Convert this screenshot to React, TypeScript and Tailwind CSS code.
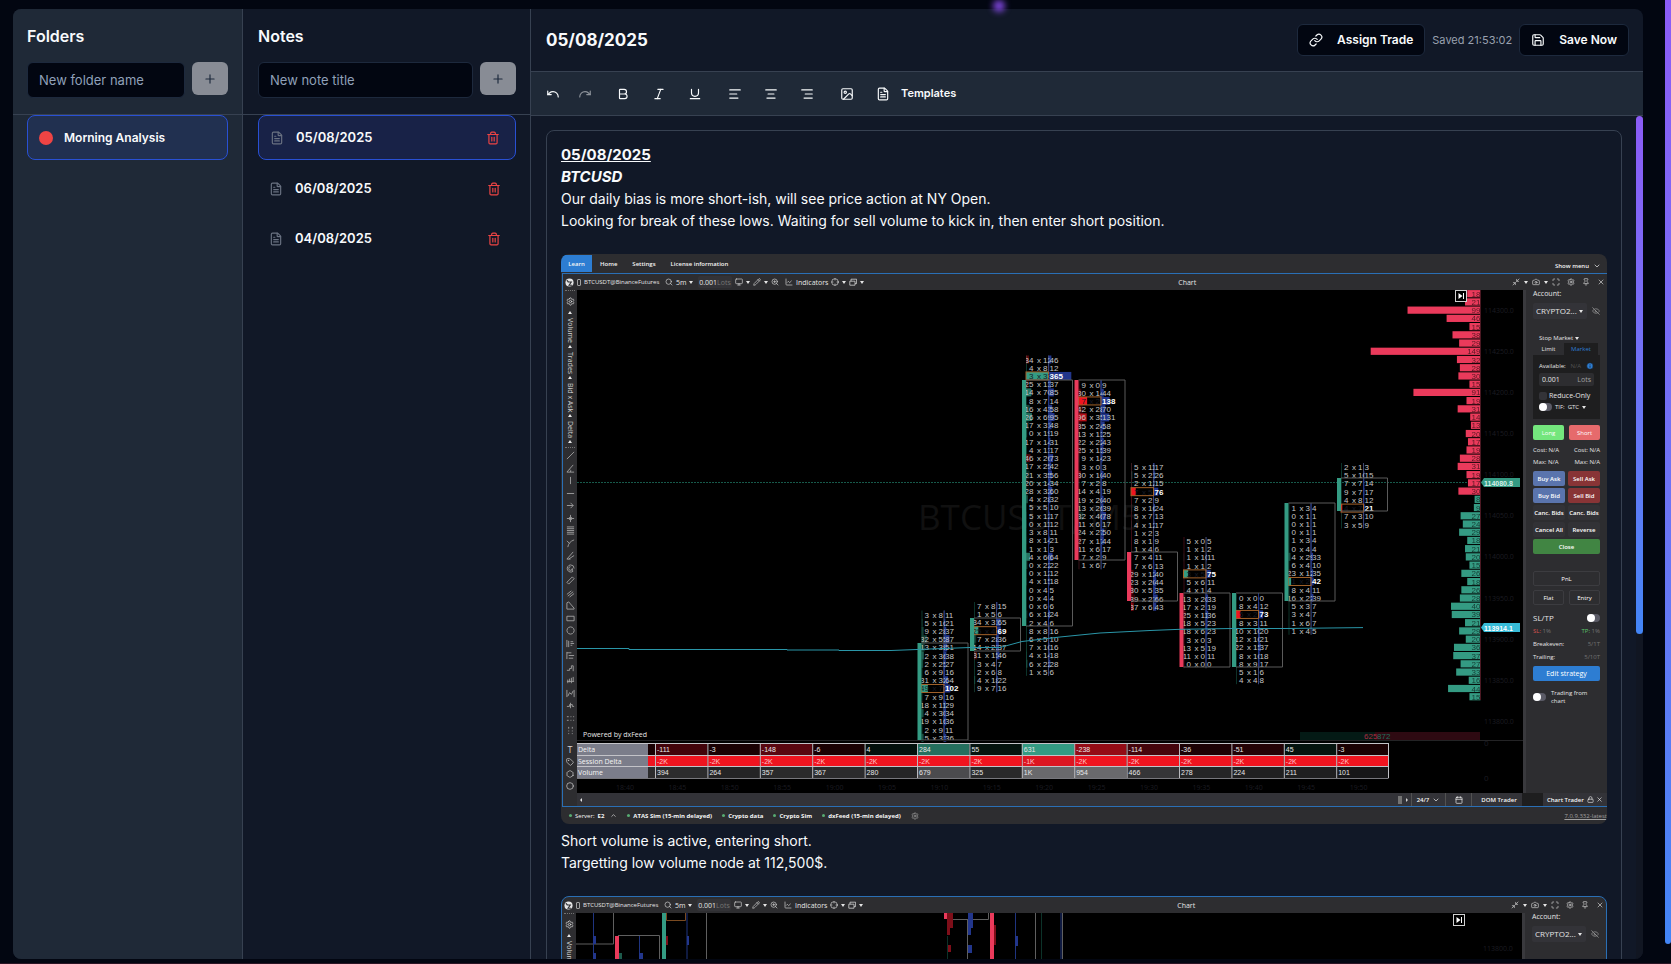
import type { ReactNode } from 'react';
import {
  AlignCenter,
  AlignLeft,
  AlignRight,
  Bold,
  Calendar,
  Camera,
  ChartLine,
  ChevronDown,
  ChevronUp,
  Circle,
  Crosshair,
  EyeOff,
  FileText,
  Hexagon,
  Image,
  Info,
  Italic,
  Link,
  Lock,
  Maximize,
  Minimize2,
  Monitor,
  Pencil,
  Pin,
  Plus,
  Redo,
  Save,
  Search,
  Settings,
  Tag,
  Trash2,
  Underline,
  Undo,
  X,
  ZoomIn,
} from 'lucide-react';

const UP = '#349b83';
const DOWN = '#ea3a5b';

const notes = [
  { id: 1, title: '05/08/2025', active: true },
  { id: 2, title: '06/08/2025', active: false },
  { id: 3, title: '04/08/2025', active: false },
];

// ---------- footprint chart ----------

const ROW = 8.22;

type Candle = {
  x: number;
  y: number; // centre of the first row
  up: boolean;
  top: number;
  bottom: number;
  rows: string; // "bid ask volume", a leading * marks the point of control
  pocUp: boolean;
};

const candles: Candle[] = [
  {
    x: 917.5, y: 614.5, up: true, top: 643, bottom: 740, pocUp: true,
    rows: '3 8 11,5 16 21,9 28 37,32 55 87,13 38 51,2 36 38,2 25 27,6 9 16,31 32 64,*49 77 102,7 9 16,18 11 29,4 30 34,19 16 36,2 9 11,5 31 36',
  },
  {
    x: 970, y: 606, up: true, top: 618, bottom: 651, pocUp: true,
    rows: '7 8 15,1 5 6,34 31 65,*25 43 69,7 28 36,14 23 37,31 15 46,3 4 7,2 6 8,4 18 22,9 7 16',
  },
  {
    x: 1022, y: 359.5, up: true, top: 380, bottom: 626, pocUp: true,
    rows: '34 12 46,4 8 12,*3 33 365,25 13 37,14 70 85,8 7 14,16 43 58,26 69 95,17 31 48,0 19 19,17 14 31,4 13 17,46 26 73,17 25 42,21 35 56,20 14 34,28 32 60,4 28 32,5 5 10,5 12 17,0 11 12,3 8 11,8 14 21,1 1 3,4 60 64,0 22 22,0 12 12,4 15 18,0 4 5,0 4 4,0 6 6,6 18 24,2 4 6,8 8 16,6 5 10,7 10 16,4 14 18,6 22 28,1 5 6',
  },
  {
    x: 1074.5, y: 384.5, up: false, top: 380, bottom: 560, pocUp: false,
    rows: '9 0 9,30 14 44,*7 2 138,42 28 70,96 35 131,35 24 58,13 13 25,22 22 43,25 15 39,9 14 23,3 0 3,30 10 40,7 2 8,14 4 19,19 20 40,13 26 39,32 46 78,11 6 17,24 27 50,27 17 44,11 6 17,7 2 9,1 6 7',
  },
  {
    x: 1127, y: 467, up: false, top: 552, bottom: 601, pocUp: false,
    rows: '5 11 17,5 21 26,2 12 15,*7 5 76,7 2 9,8 16 24,5 7 13,4 12 17,1 2 3,8 1 9,1 4 6,7 4 11,7 6 13,29 12 40,23 20 44,30 5 35,39 27 66,37 6 43',
  },
  {
    x: 1179.5, y: 541, up: false, top: 593, bottom: 667, pocUp: true,
    rows: '5 0 5,1 1 2,1 10 11,1 1 2,*3 5 75,5 6 11,4 1 4,13 20 33,17 2 19,25 11 36,18 5 23,18 6 23,3 0 3,13 5 19,11 0 11,0 0 0',
  },
  {
    x: 1232, y: 598, up: true, top: 593, bottom: 667, pocUp: false,
    rows: '0 0 0,8 4 12,*5 2 73,8 3 11,10 10 20,12 10 21,22 15 37,8 10 18,8 9 17,5 1 6,4 4 8',
  },
  {
    x: 1284.5, y: 507.5, up: true, top: 503, bottom: 601, pocUp: true,
    rows: '1 3 4,0 1 1,0 1 1,0 1 1,1 3 4,0 4 4,4 29 33,6 4 10,23 12 35,*1 2 42,8 4 11,16 22 39,5 3 7,3 4 7,1 6 7,1 4 5',
  },
  {
    x: 1337, y: 467, up: true, top: 478, bottom: 511, pocUp: false,
    rows: '2 1 3,5 10 15,7 7 14,9 7 17,4 8 12,*4 7 21,7 3 10,3 5 9',
  },
];

const profile = [
  18, 21, 99, 46, 15, 38, 29, 149, 32, 28, 30, 15, 91, 19, 31, 14, 13, 20, 17, 19, 28, 31, 19, 17, 30, 8, 9, 27, 24, 29,
  18, 21, 20, 15, 26, 18, 26, 28, 40, 39, 21, 29, 20, 36, 37, 27, 33, 16, 44, 15,
];

const priceLabels = [
  '114300.0', '114250.0', '114200.0', '114150.0', '114100.0', '114050.0', '114000.0', '113950.0', '113900.0',
  '113850.0', '113800.0',
];

const clusterStats = [
  { delta: '-111', session: '-2K', volume: '394', fill: '#43040b', vol: '#2c2c2d' },
  { delta: '-3', session: '-2K', volume: '264', fill: '#1a0103', vol: '#242425' },
  { delta: '-148', session: '-2K', volume: '357', fill: '#5a0710', vol: '#2a2a2b' },
  { delta: '-6', session: '-2K', volume: '367', fill: '#1a0103', vol: '#2b2b2c' },
  { delta: '4', session: '-2K', volume: '280', fill: '#03100d', vol: '#252526' },
  { delta: '284', session: '-2K', volume: '679', fill: '#256f5e', vol: '#4b4b4e' },
  { delta: '55', session: '-2K', volume: '325', fill: '#05140f', vol: '#29292a' },
  { delta: '631', session: '-1K', volume: '1K', fill: '#349b83', vol: '#69696c' },
  { delta: '-238', session: '-2K', volume: '954', fill: '#940c16', vol: '#69696c' },
  { delta: '-114', session: '-2K', volume: '466', fill: '#45050c', vol: '#353537' },
  { delta: '-36', session: '-2K', volume: '278', fill: '#1d0205', vol: '#252526' },
  { delta: '-51', session: '-2K', volume: '224', fill: '#240306', vol: '#202021' },
  { delta: '45', session: '-2K', volume: '211', fill: '#05140f', vol: '#1f1f20' },
  { delta: '-3', session: '-2K', volume: '101', fill: '#1a0103', vol: '#171718' },
];

const times = [
  '18:40', '18:45', '18:50', '18:55', '19:00', '19:05', '19:10', '19:15', '19:20', '19:25', '19:30', '19:35', '19:40',
  '19:45', '19:50',
];

function Footprint({ c, id }: { c: Candle; id: string }) {
  const rows = c.rows.split(',');
  const last = c.y + (rows.length - 1) * ROW;
  return (
    <g>
      <clipPath id={id}>
        <rect x={c.x + 4} y={c.y - 8} width={23.5} height={last - c.y + 16} />
      </clipPath>
      <path d={`M${c.x + 4.5} ${c.y - 4}V${last + 4}`} stroke={c.up ? '#0c3229' : '#3a0c14'} />
      <path d={`M${c.x + 26.5} ${c.y - 4}V${last + 4}`} stroke="#4a4f66" />
      <path d={`M${c.x + 26.5} ${c.top}V${c.bottom}`} stroke="#1f3480" />
      {rows.map((row, i) => {
        const poc = row.startsWith('*');
        const [bid, ask, vol] = row.replace('*', '').split(' ').map(Number);
        const y = c.y + i * ROW;
        const bar = Math.min(vol / 16, 23);
        const tint = poc ? 1 : Math.min(0.75, Math.abs(ask - bid) / 60);
        const up = poc ? c.pocUp : ask >= bid;
        return (
          <g key={i}>
            <rect x={c.x + 4} y={y - 4} width={bar} height={8} fill={up ? UP : '#f0141f'} opacity={tint} />
            <rect x={c.x + 26.5} y={y - 4} width={bar} height={8} fill="#22368c" />
            {poc && <rect x={c.x + 4} y={y - 4} width={22.5} height={8} fill="none" stroke="#a3622a" />}
            <g clipPath={`url(#${id})`} fill={poc ? '#171b26' : '#c6c6c6'}>
              <text x={c.x + 11.5} y={y + 3} textAnchor="end">{bid}</text>
              <text x={c.x + 15} y={y + 3}>x</text>
              <text x={c.x + 21} y={y + 3}>{ask}</text>
            </g>
            <text x={c.x + 27.5} y={y + 3} fill={poc ? '#ffffff' : '#c6c6c6'} fontWeight={poc ? 700 : 400}>
              {vol}
            </text>
          </g>
        );
      })}
      <rect x={c.x} y={c.top} width={4} height={c.bottom - c.top} fill={c.up ? UP : DOWN} />
      <path d={`M${c.x + 4} ${c.top}h46.5V${c.bottom}h-46.5`} fill="none" stroke="#5a5a5a" />
    </g>
  );
}

function StepButton({ x, y }: { x: number; y: number }) {
  return (
    <g>
      <rect x={x} y={y} width={11} height={11} fill="#000" stroke="#d0d0d0" />
      <path d={`M${x + 3} ${y + 2.5}v6l4-3zM${x + 7.5} ${y + 2.5}h1v6h-1z`} fill="#fff" />
    </g>
  );
}

function ClusterChart() {
  return (
    <svg
      viewBox="577 290 946 503"
      preserveAspectRatio="none"
      className="h-[503px] w-full bg-black"
      fontFamily="'Liberation Sans', Arial, sans-serif"
      fontSize="8"
      role="img"
      aria-label="BTCUSDT cluster chart"
    >
      <text x="918" y="530" fontSize="35" fill="#101010" fontFamily="'Open Sans', sans-serif">
        BTCUSDT, M5
      </text>
      <path d="M577 482.5H1481" stroke="#17594a" strokeDasharray="2 1" />
      {candles.map((c, i) => (
        <Footprint key={c.x} c={c} id={`col-${i}`} />
      ))}
      <path
        d="M577 648.5h52v1h158v.5h52v.5h52l26-1 53-2h30l22-6 38-4.500 40-4 50-2.500 30-1.200 52-.8h53l78-.9"
        fill="none"
        stroke="#2a96a8"
      />

      {/* volume profile */}
      {profile.map((v, i) => {
        const y = 293.7 + i * 8.225;
        const w = v * 0.737;
        return (
          <g key={i}>
            <rect x={1480.5 - w} y={y - 3.6} width={w} height={7.2} fill={i < 25 ? DOWN : UP} />
            <text x={1480.5} y={y + 3} textAnchor="end" fill="#000" opacity="0.62">{v}</text>
          </g>
        );
      })}
      <path d="M1480.500 290V700" stroke="#4b1822" />
      <StepButton x={1455.5} y={290.5} />
      <g fill="#1c1c22" fontFamily="'Open Sans', sans-serif">
        {priceLabels.map((p, i) => (
          <text key={p} x="1484" y={312.5 + i * 41.15} fontSize="7">{p}</text>
        ))}
        <text x="1484" y="746">0</text>
        <text x="1484" y="781">0</text>
      </g>
      <path d="M1481 482.500l3-4.500h36v9h-36z" fill={UP} />
      <text x="1484" y="485.5" fill="#d5efe8" fontWeight="700" fontSize="7">114080.8</text>
      <path d="M1481 627.500l3-4.500h36v9h-36z" fill="#37bcd8" />
      <text x="1484" y="630.5" fill="#fff" fontWeight="700" fontSize="7">113914.1</text>

      <rect x="1300" y="732" width="75" height="8" fill="#041a15" />
      <rect x="1375" y="732" width="105" height="8" fill="#2e0a12" />
      <text x="1364" y="739" fill="#a82c42">625</text>
      <text x="1377" y="739" fill="#20705e">872</text>
      <text x="583" y="737" fontSize="7" fill="#e8e8e8" fontFamily="'Open Sans', sans-serif">Powered by dxFeed</text>

      {/* cluster statistic */}
      <path d="M577 740.500H1523" stroke="#232325" />
      <rect x="577" y="743" width="71" height="35" fill="#7b7d8a" />
      <rect x="648" y="743" width="7" height="12" fill="#1a0103" />
      <rect x="648" y="756" width="7" height="10" fill="#f0141f" />
      <rect x="648" y="767" width="7" height="11" fill="#2c2c2d" />
      {clusterStats.map((s, i) => {
        const x = 655 + i * 52.4;
        return (
          <g key={i} fontSize="7" fill="#e6e6e6">
            <rect x={x} y="743" width="52.4" height="12" fill={s.fill} />
            <rect x={x} y="755" width="52.4" height="11" fill={s.session === '-1K' ? '#dd1621' : '#f0141f'} />
            <rect x={x} y="767" width="52.4" height="11" fill={s.vol} />
            <path d={`M${x + 0.5} 743v35`} stroke="#b9b9bd" />
            <text x={x + 2} y="752">{s.delta}</text>
            <text x={x + 2} y="764" fill="#ffc4c8">{s.session}</text>
            <text x={x + 2} y="775">{s.volume}</text>
          </g>
        );
      })}
      <path d="M577 743.500H1388.500M577 755.500H1388.500M577 766.500H1388.500M1388.500 743V778" stroke="#c3c3c8" fill="none" />
      <path d="M577 778.500H1388.500" stroke="#77777c" />
      <g fontSize="7" fill="#f4f4f4" fontFamily="'Open Sans', sans-serif">
        <text x="578" y="752">Delta</text>
        <text x="578" y="764">Session Delta</text>
        <text x="578" y="775">Volume</text>
      </g>
      <g fontSize="7" fill="#1c1c22" textAnchor="middle" fontFamily="'Open Sans', sans-serif">
        {times.map((t, i) => (
          <text key={t} x={625 + i * 52.4} y="790">{t}</text>
        ))}
      </g>
    </svg>
  );
}

// next capture, only its first rows are in view
function ClusterChartNext() {
  return (
    <svg viewBox="577 913 946 503" preserveAspectRatio="none" className="h-[503px] w-full bg-black" role="img" aria-label="BTCUSDT cluster chart, later">
      <g fill="none" stroke="#5f5f5f">
        <path d="M614.500 913v31H577M594.500 944v472M619 935.500h41.500V1416M707.500 913v503M948 919.500h41.500V913M968.500 919.500V1416M1036.500 913v503M1063.500 913v503" />
      </g>
      <path d="M594.500 913v503M640.500 936v480M688 913v503M1016.500 913v503M1062 913v503" stroke="#1f3480" />
      <path d="M594 936h3v8h-3zM594 953h3v10h-3zM640 953h4v10h-4zM688 936h2v9h-2zM969 913h5v15h-5zM969 928h3v7h-3zM969 945h4v8h-4zM1016 936h3v10h-3z" fill="#22368c" />
      <path d="M663 913h4v503h-4z" fill={UP} />
      <path d="M619 953h4v10h-4z" fill="#1d5a4c" />
      <path d="M616 936h4v480h-4zM945 913h3v6h-3zM991 913h4v503h-4zM667 913h1v7h-1z" fill={DOWN} />
      <path d="M948 913h6v15h-6zM948 928h3v7h-3zM948 945h4v7h-4zM995 925h2v20h-2zM667 936h2v9h-2z" fill="#7e0e19" />
      <path d="M667.500 913v7.500h19V913" stroke="#7a4a20" fill="none" />
      <path d="M948.500 936v480M1042.500 913v503" stroke="#0c3229" />
      <StepButton x={1454.5} y={914.5} />
      <text x="1484" y="951" fontSize="7" fill="#1c1c22" fontFamily="'Open Sans', sans-serif">113800.0</text>
    </svg>
  );
}

// ---------- trading terminal chrome ----------

function Caret() {
  return <span className="size-0 border-x-2 border-t-3 border-x-transparent border-t-neutral-200" />;
}

function WindowBar() {
  const icon = 'size-2 shrink-0 text-neutral-300';
  return (
    <div className="flex h-4 items-center justify-between pr-[2px] pl-[2px] text-[7px] leading-none text-neutral-200">
      <div className="flex flex-3 items-center gap-[3px]">
        <svg viewBox="0 0 10 10" className="size-[9px]">
          <circle cx="5" cy="5" r="4.500" fill="#e5e5e5" />
          <path d="M3 4.500h4L4.500 8H8M2 2.500l2 2" stroke="#2d2d30" strokeWidth="1.200" fill="none" />
        </svg>
        <span className="h-[7px] w-1 rounded-[1px] border border-neutral-400" />
        <span className="w-[78px] whitespace-nowrap text-[6px] font-medium">BTCUSDT@BinanceFutures</span>
        <Search className={icon} />
        <span className="w-[10px]">5m</span>
        <Caret />
        <span className="ml-[2px] flex h-3 w-[34px] items-center justify-center rounded-xs bg-[#333337]">
          0.001<span className="text-neutral-500">Lots</span>
        </span>
        <Monitor className={icon} />
        <Caret />
        <Pencil className={icon} />
        <Caret />
        <ZoomIn className={icon} />
        <ChartLine className="ml-[3px] size-2 shrink-0 text-neutral-300" />
        <span>Indicators</span>
        <Crosshair className={icon} />
        <Caret />
        <svg viewBox="0 0 10 10" className={icon} fill="none" stroke="currentColor">
          <path d="M1 4h6.500v5H1zM2.500 4V1.500H9.500V7H7.500" />
        </svg>
        <Caret />
      </div>
      <span>Chart</span>
      <div className="flex flex-2 items-center justify-end gap-1">
        <Minimize2 className={icon} />
        <Caret />
        <Camera className={icon} />
        <Caret />
        <Maximize className={icon} />
        <Settings className="ml-[3px] size-2 text-neutral-300" />
        <Pin className="ml-[3px] size-2 text-neutral-300" />
        <X className="ml-[3px] size-2 text-neutral-300" />
      </div>
    </div>
  );
}

// one 10x10 path per drawing tool, top to bottom
const drawTools = [
  'M1 9L9 1',
  'M8 1L1 9H9M4 6q2 1 1 3',
  'M5 1V9',
  'M1 5H9',
  'M1 5H8M5 2L8 5L5 8',
  'M5 1V9M1 5H9M3.500 3.500l3 3M6.500 3.500l-3 3',
  'M1 1H9M1 3H9M1 5H9M1 7H9M1 9H9',
  'M2 9Q3 3 9 1M1 2l3 3',
  'M1 9L8 1M3 9L9 5M1 9H5',
  'M5 1a4 4 0 1 0 3 7M5 3a2 2 0 1 0 2 2V8M5 1a4 4 0 0 1 4 4',
  'M1 7L7 1L9 3L3 9Z',
  'M1 6L6 2M2 8L8 3M4 9L9 5',
  'M1 9V2L3 1L9 8V9Z',
  'M1 2.500H9V7.500H1Z',
  'M5 1a4 4 0 1 0 .1 0Z',
  'M1 1V9M3 2V9M5 3H8M5 5H9M5 7H7',
  'M1 1V9M1 2H6M3 5H9M3 8H8',
  'M1 7H4V5H6V2H8V8',
  'M2 4V8M4 3V7M6 2V8M8 1V6M1 6H9',
  'M1 1V9M9 1V9M2 8L4 4L6 6L8 2',
  'M1 6H4V4H7V6H9M5 2V8',
  'M1 3H3M5 3H6M8 3H9M1 7H3M5 7H6M8 7H9',
  'M3 1V3M3 5V6M3 8V9M7 1V3M7 5V6M7 8V9',
];

function ToolStrip() {
  return (
    <div className="flex h-full w-[14px] shrink-0 flex-col items-center overflow-hidden bg-[#2d2d30] text-[7px] leading-none text-neutral-300">
      <span className="h-1 w-[10px] border-t border-dotted border-neutral-500" />
      <Settings className="mt-[3px] size-[9px]" />
      <div className="mt-[5px] flex h-[132px] flex-col items-center justify-between">
        {['Volume', 'Trades', 'Bid x Ask', 'Delta'].map((t) => (
          <div key={t} className="flex flex-col items-center gap-1">
            <span className="size-0 border-x-2 border-b-3 border-x-transparent border-b-neutral-200" />
            <span className="[writing-mode:vertical-rl]">{t}</span>
          </div>
        ))}
        <span className="size-0 border-x-2 border-b-3 border-x-transparent border-b-neutral-200" />
      </div>
      <span className="mt-1 h-1 w-[10px] border-t border-dotted border-neutral-500" />
      <div className="flex h-[284px] shrink-0 flex-col justify-between">
        {drawTools.map((d) => (
          <svg key={d} viewBox="0 0 10 10" className="size-[9px] text-neutral-400" fill="none" stroke="currentColor">
            <path d={d} />
          </svg>
        ))}
      </div>
      <div className="mt-[10px] flex flex-col items-center gap-1">
        <span className="text-[9px] leading-[9px]">T</span>
        <Tag className="size-2" />
        <Hexagon className="size-2" />
        <Circle className="size-2" />
      </div>
    </div>
  );
}

function Toggle({ label }: { label: string }) {
  return (
    <span className="relative flex h-2 w-[13px] shrink-0 items-center rounded-full bg-[#5b5b66]">
      <input type="checkbox" aria-label={label} className="size-2 appearance-none rounded-full bg-white" />
    </span>
  );
}

function Mini({ className, children }: { className: string; children: ReactNode }) {
  return (
    <button type="button" className={`flex h-[15px] flex-1 items-center justify-center rounded-xs whitespace-nowrap text-white ${className}`}>
      {children}
    </button>
  );
}

function OrderPanel() {
  return (
    <div className="flex w-[84px] shrink-0 flex-col overflow-hidden border-l-3 border-[#39393d] bg-[#2d2d30] pr-[7px] pl-[7px] text-[6px] leading-[8px] font-medium text-neutral-200">
      <span className="text-[7px] font-normal">Account:</span>
      <div className="mt-[5px] flex h-4 shrink-0 items-center justify-between rounded-xs">
        <label className="relative flex h-full w-[54px] items-center rounded-xs bg-[#333338] pr-1 pl-[3px]">
          <select aria-label="Account" className="w-full appearance-none bg-transparent text-[8px] leading-none font-normal">
            <option>CRYPTO2...</option>
          </select>
          <Caret />
        </label>
        <EyeOff className="size-2 text-neutral-400" />
      </div>
      <span className="mt-[15px] flex items-center gap-[2px] pl-[6px]">
        Stop Market <Caret />
      </span>
      <div className="mt-px flex h-3 shrink-0 items-center">
        <button type="button" className="h-full w-[31px]">Limit</button>
        <button type="button" className="h-full w-[34px] bg-[#1e1e1f] text-[#2d7dd2]">Market</button>
      </div>
      <div className="flex h-16 shrink-0 flex-col bg-[#1e1e1f] px-[6px] pt-[7px]">
        <span className="flex items-center justify-between">
          Available: <span className="text-neutral-600">N/A</span>
          <Info className="size-2 fill-[#2d7dd2] text-neutral-900" />
        </span>
        <label className="mt-[3px] flex h-[13px] items-center rounded-xs bg-[#2d2d30] px-[3px] text-[7px]">
          <input aria-label="Size" defaultValue="0.001" className="w-full min-w-0 bg-transparent" />
          <span className="text-neutral-400">Lots</span>
        </label>
        <label className="mt-[6px] flex items-center gap-[2px] text-[7px]">
          <input type="checkbox" className="size-2 shrink-0 appearance-none rounded-xs bg-[#333338]" />
          <span className="whitespace-nowrap">Reduce-Only</span>
        </label>
        <span className="mt-[3px] flex items-center gap-[3px]">
          <Toggle label="Time in force" /> TIF: <span>GTC</span> <Caret />
        </span>
      </div>
      <div className="mt-[6px] flex shrink-0 gap-[5px]">
        <Mini className="bg-[#74e67d]">Long</Mini>
        <Mini className="bg-[#e66a6c]">Short</Mini>
      </div>
      <div className="mt-[6px] flex justify-between"><span>Cost: N/A</span><span>Cost: N/A</span></div>
      <div className="mt-1 flex justify-between"><span>Max: N/A</span><span>Max: N/A</span></div>
      <div className="mt-[5px] flex shrink-0 flex-col gap-[2px] font-semibold">
        <div className="flex gap-[3px]">
          <Mini className="bg-[#5a74ad]">Buy Ask</Mini>
          <Mini className="bg-[#883436]">Sell Ask</Mini>
        </div>
        <div className="flex gap-[3px]">
          <Mini className="bg-[#5a74ad]">Buy Bid</Mini>
          <Mini className="bg-[#883436]">Sell Bid</Mini>
        </div>
        <div className="flex gap-[3px]">
          <Mini className="bg-[#323236]">Canc. Bids</Mini>
          <Mini className="bg-[#323236]">Canc. Bids</Mini>
        </div>
        <div className="flex gap-[3px]">
          <Mini className="bg-[#323236]">Cancel All</Mini>
          <Mini className="bg-[#323236]">Reverse</Mini>
        </div>
        <div className="flex">
          <Mini className="bg-[#418543]">Close</Mini>
        </div>
      </div>
      <div className="mt-[17px] flex shrink-0"><Mini className="border border-[#3c3c40] text-neutral-400">PnL</Mini></div>
      <div className="mt-1 flex shrink-0 gap-[5px]">
        <Mini className="border border-[#3c3c40] text-neutral-400">Flat</Mini>
        <Mini className="border border-[#3c3c40] text-neutral-400">Entry</Mini>
      </div>
      <div className="mt-[9px] flex items-center justify-between text-[8px] font-normal">SL/TP <Toggle label="SL/TP" /></div>
      <div className="mt-[5px] flex justify-between">
        <span><span className="text-[#d9534f]">SL:</span> <span className="text-neutral-500">1%</span></span>
        <span><span className="text-[#5cc46a]">TP:</span> <span className="text-neutral-500">1%</span></span>
      </div>
      <div className="mt-[5px] flex justify-between">Breakeven: <span className="text-neutral-500">5/1T</span></div>
      <div className="mt-[5px] flex justify-between">Trailing: <span className="text-neutral-500">5/10T</span></div>
      <div className="mt-[5px] flex shrink-0 text-[7px]"><Mini className="bg-[#2d7dd2]">Edit strategy</Mini></div>
      <div className="mt-2 flex items-center gap-[5px]">
        <Toggle label="Trading from chart" />
        <span>Trading from chart</span>
      </div>
    </div>
  );
}

function TerminalSnapshot() {
  const sources = ['ATAS Sim (15-min delayed)', 'Crypto data', 'Crypto Sim', 'dxFeed (15-min delayed)'];
  return (
    <figure className="overflow-hidden rounded-lg bg-[#2d2d30] font-['Open_Sans',sans-serif] text-neutral-100">
      <div className="flex h-[19px] items-center pr-[6px] text-[6px] leading-none font-semibold">
        <span className="flex h-[17px] w-[31px] items-center justify-center bg-[#2d7dd2]">Learn</span>
        <span className="ml-2">Home</span>
        <span className="ml-[15px]">Settings</span>
        <span className="ml-[15px]">License information</span>
        <span className="mt-1 ml-auto flex items-center gap-1">
          Show menu
          <ChevronDown className="size-2" />
        </span>
      </div>
      <div className="ml-px flex h-[534px] border-y border-l border-[#2a6fb5]">
        <div className="flex min-w-0 flex-1 flex-col">
          <WindowBar />
          <div className="flex min-h-0 flex-1">
            <ToolStrip />
            <div className="flex min-w-0 flex-1 flex-col">
              <div className="flex">
                <div className="min-w-0 flex-1"><ClusterChart /></div>
                <OrderPanel />
              </div>
              <div className="flex flex-1 items-center bg-[#333338] pr-1 text-[6px] leading-none font-semibold">
                <span className="ml-[3px] size-0 border-y-2 border-r-2 border-y-transparent border-r-neutral-200" />
                <span className="ml-auto h-2 w-1 bg-neutral-500" />
                <span className="ml-1 size-0 border-y-2 border-l-2 border-y-transparent border-l-neutral-300" />
                <span className="ml-[3px] flex h-full w-[35px] items-center justify-center gap-[3px] border-x border-neutral-600">
                  24/7 <ChevronDown className="size-2" />
                </span>
                <span className="flex h-full w-[26px] items-center justify-center border-r border-neutral-600">
                  <Calendar className="size-2" />
                </span>
                <span className="w-[50px] pl-1 text-center">DOM Trader</span>
                <span className="h-full w-[21px] bg-[#1e1e1f]" />
                <span className="ml-1 w-[40px] whitespace-nowrap">Chart Trader</span>
                <Lock className="size-[7px]" />
                <X className="ml-[2px] size-[7px]" />
              </div>
            </div>
          </div>
        </div>
      </div>
      <figcaption className="flex h-[17px] items-center gap-[10px] pl-2 text-[6px] leading-none font-bold">
        <span className="flex items-center gap-[3px]">
          <i className="size-[3px] rounded-full bg-[#57ab72]" />
          <span className="font-normal">Server:</span>
          <span>E2</span>
          <ChevronUp className="ml-[3px] size-[7px]" />
        </span>
        {sources.map((s) => (
          <span key={s} className="flex items-center gap-[3px]">
            <i className="size-[3px] rounded-full bg-[#57ab72]" />
            {s}
          </span>
        ))}
        <Settings className="size-2 text-neutral-400" />
        <a href="#version" className="ml-auto font-normal text-neutral-400 underline">7.0.9.332-latest</a>
      </figcaption>
    </figure>
  );
}

function TerminalSnapshotNext() {
  return (
    <figure className="overflow-hidden rounded-lg border border-[#2a6fb5] bg-[#2d2d30] font-['Open_Sans',sans-serif] text-neutral-100">
      <WindowBar />
      <div className="flex h-[516px]">
        <ToolStrip />
        <div className="min-w-0 flex-1"><ClusterChartNext /></div>
        <OrderPanel />
      </div>
    </figure>
  );
}

// ---------- journal ----------

function ToolButton({ label, narrow, dim, children }: { label: string; narrow?: boolean; dim?: boolean; children: ReactNode }) {
  return (
    <button
      type="button"
      aria-label={label}
      className={`flex h-8 items-center justify-center ${narrow ? 'w-8' : 'w-9'} ${dim ? 'opacity-50' : ''}`}
    >
      {children}
    </button>
  );
}

function AddForm({ label }: { label: string }) {
  return (
    <form className="mt-[13px] flex items-start gap-[7px]">
      <input
        aria-label={label}
        placeholder={label}
        className="h-9 min-w-0 flex-1 rounded-md border border-slate-800 bg-[#020611] px-[11px] text-[13px] placeholder:text-slate-400"
      />
      <button type="button" aria-label="Add" className="flex h-[33px] w-9 items-center justify-center rounded-md bg-[#888c95] text-slate-800">
        <Plus className="size-[14px]" />
      </button>
    </form>
  );
}

export default function App() {
  const icon = 'size-[14px]';
  return (
    <div className="relative flex h-screen overflow-hidden border-b border-[#2a1424] bg-[#020611] font-[Inter,sans-serif] text-slate-50">
      <div className="absolute top-0 left-[993px] z-10 size-3 rounded-full bg-[#7c45d8] blur-[3px]" />

      <main className="mt-[9px] mr-[22px] mb-1 ml-[13px] flex min-w-0 flex-1 overflow-hidden rounded-lg bg-[#111827]">
        {/* folders */}
        <aside className="flex w-[230px] shrink-0 flex-col border-r border-[#374151] bg-[#1f2937]">
          <div className="h-[106px] border-b border-[#374151] px-[14px] pt-[15px]">
            <h2 className="text-base leading-[25px] font-semibold">Folders</h2>
            <AddForm label="New folder name" />
          </div>
          <div className="px-[14px]">
            <button type="button" className="flex h-[45px] w-full items-center gap-[11px] rounded-lg border border-[#2950d4] bg-[#213050] px-[11px] text-[12px] font-semibold">
              <span className="size-[14px] rounded-full bg-[#ef4444]" />
              Morning Analysis
            </button>
          </div>
        </aside>

        {/* notes */}
        <aside className="flex w-[288px] shrink-0 flex-col border-r border-[#374151]">
          <div className="h-[106px] border-b border-[#374151] pt-[15px] pr-[14px] pl-[15px]">
            <h2 className="text-base leading-[25px] font-semibold">Notes</h2>
            <AddForm label="New note title" />
          </div>
          <ul className="flex flex-col gap-[7px] pr-[14px] pl-[15px]">
            {notes.map((n) => (
              <li
                key={n.id}
                className={`flex items-center gap-3 rounded-lg px-[11px] text-[13px] font-semibold ${
                  n.active ? 'h-[45px] border border-[#2950d4] bg-[#182247]' : 'h-[43px]'
                }`}
              >
                <FileText className="size-[14px] text-gray-500" />
                <a href={`#note-${n.id}`} className="flex-1">{n.title}</a>
                <button type="button" aria-label={`Delete ${n.title}`} className="w-[18px] text-[#ef4444]">
                  <Trash2 className="size-[14px]" />
                </button>
              </li>
            ))}
          </ul>
        </aside>

        {/* editor */}
        <section className="flex min-w-0 flex-1 flex-col">
          <header className="flex h-[63px] shrink-0 items-center justify-between border-b border-[#374151] pr-[14px] pl-[15px]">
            <h1 className="text-[17px] leading-6 font-bold">05/08/2025</h1>
            <div className="flex items-center gap-[7px] text-[12px] font-semibold">
              <button type="button" className="flex h-8 items-center gap-[14px] rounded-md border border-slate-800 bg-[#020611] px-[11px]">
                <Link className={icon} />
                Assign Trade
              </button>
              <span className="text-[11px] font-normal text-gray-400">Saved 21:53:02</span>
              <button type="button" className="flex h-8 items-center gap-[14px] rounded-md border border-slate-800 bg-[#020611] px-[11px]">
                <Save className={icon} />
                Save Now
              </button>
            </div>
          </header>

          <div className="flex h-11 shrink-0 items-center gap-1 border-b border-[#374151] bg-[#1f2937] px-[6px]">
            <div className="flex">
              <ToolButton label="Undo" narrow><Undo className={icon} /></ToolButton>
              <ToolButton label="Redo" narrow dim><Redo className={icon} /></ToolButton>
            </div>
            <div className="flex">
              <ToolButton label="Bold"><Bold className={icon} /></ToolButton>
              <ToolButton label="Italic"><Italic className={icon} /></ToolButton>
              <ToolButton label="Underline"><Underline className={icon} /></ToolButton>
            </div>
            <div className="flex">
              <ToolButton label="Align left"><AlignLeft className={icon} /></ToolButton>
              <ToolButton label="Align center"><AlignCenter className={icon} /></ToolButton>
              <ToolButton label="Align right"><AlignRight className={icon} /></ToolButton>
            </div>
            <div className="flex">
              <ToolButton label="Insert image"><Image className={icon} /></ToolButton>
              <button type="button" className="flex h-8 items-center gap-[11px] px-[11px] text-[11px] font-semibold">
                <FileText className={icon} />
                Templates
              </button>
            </div>
          </div>

          <div className="flex min-h-0 flex-1">
            <div className="min-w-0 flex-1 overflow-hidden pt-[14px] pr-[14px] pl-[15px]">
              <article className="rounded-lg border border-[#374151] px-[14px] py-[13px] text-[14px] leading-[22px]">
                <p className="text-[15px] leading-[22px] font-bold underline">05/08/2025</p>
                <p className="text-[15px] leading-[22px] font-bold italic">BTCUSD</p>
                <p>Our daily bias is more short-ish, will see price action at NY Open.</p>
                <p>Looking for break of these lows. Waiting for sell volume to kick in, then enter short position.</p>
                <div className="mt-[22px]"><TerminalSnapshot /></div>
                <p className="mt-[6px]">Short volume is active, entering short.</p>
                <p>Targetting low volume node at 112,500$.</p>
                <div className="mt-[22px]"><TerminalSnapshotNext /></div>
              </article>
            </div>
            <div className="w-[7px] shrink-0 bg-[#111622]">
              <div className="h-[61.5%] rounded-full bg-linear-to-b from-[#8b5cf6] to-[#4285f6]" />
            </div>
          </div>
        </section>
      </main>

      <div className="w-[6px] shrink-0">
        <div className="h-[98%] rounded-b-full bg-linear-to-b from-[#8b5cf6] to-[#4285f6]" />
      </div>
    </div>
  );
}
